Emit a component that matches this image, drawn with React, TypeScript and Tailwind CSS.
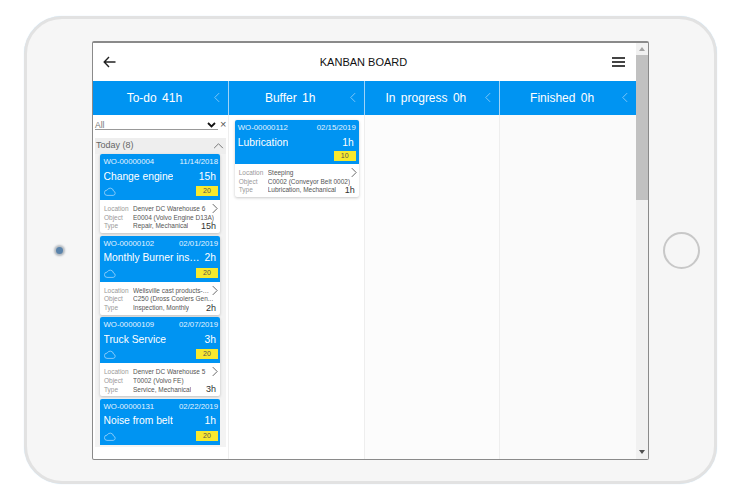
import React from "react";

const Cloud = () => (
  <svg width="12" height="9" viewBox="0 0 14 10.5" fill="none" stroke="#a9d8fb" strokeWidth="0.9">
    <path d="M3.5 9.8h7.2a2.6 2.6 0 0 0 .4-5.1A3.9 3.9 0 0 0 3.7 3.6 3.1 3.1 0 0 0 3.5 9.8z" />
  </svg>
);

const Chevron = ({ dir, color, size = 10 }: { dir: "left" | "right" | "up"; color: string; size?: number }) => {
  const d = dir === "left" ? "M6.5 1 L2.5 5 L6.5 9" : dir === "right" ? "M2.5 1 L6.5 5 L2.5 9" : "M1 6.5 L5 2.5 L9 6.5";
  return (
    <svg width={size} height={size} viewBox="0 0 10 10" fill="none" stroke={color} strokeWidth="0.9">
      <path d={d} />
    </svg>
  );
};

type CardData = {
  wo: string;
  date: string;
  title: string;
  hours: string;
  badge: string;
  location: string;
  object: string;
  type: string;
  cloud?: boolean;
  blueOnly?: boolean;
};

const WorkCard = ({ c, wide }: { c: CardData; wide?: boolean }) => (
  <div className={`shrink-0 ${wide ? "w-[124px]" : "w-[120px]"} ${c.blueOnly ? "" : "rounded-[2px] bg-white shadow-[0_1px_3px_rgba(0,0,0,0.22)]"}`}>
    <div className={`bg-[#0094f2] text-white rounded-t-[2px] ${wide ? "h-[44px] pl-[3px] pr-[3px]" : "h-[46px] pl-[3.5px] pr-[2px]"} flex flex-col`}>
      <div className="flex justify-between text-[7.8px] leading-[10px] pt-[3px] text-[#e3f3ff]">
        <span>{c.wo}</span>
        <span>{c.date}</span>
      </div>
      <div className="flex justify-between items-center text-[10.3px] leading-[14px] mt-[2.5px]">
        <span className="truncate">{c.title}</span>
        <span className="ml-[2px] pr-[2px] shrink-0">{c.hours}</span>
      </div>
      <div className={`flex justify-between items-end ${wide ? "mt-[1.5px]" : "mt-[2.5px]"}`}>
        {c.cloud ? <Cloud /> : <span />}
        <span className="w-[22px] h-[10px] bg-[#f7e92e] text-[#555] text-[7px] leading-[10px] text-center">{c.badge}</span>
      </div>
    </div>
    {!c.blueOnly && (
      <div className="relative h-[33px] px-[4px] pt-[5px] text-[6.5px] leading-[8.7px] text-[#555]">
        <div className="flex">
          <span className="w-[29px] shrink-0 text-[#999]">Location</span>
          <span className="truncate pr-[5px]">{c.location}</span>
        </div>
        <div className="flex">
          <span className="w-[29px] shrink-0 text-[#999]">Object</span>
          <span className="truncate">{c.object}</span>
        </div>
        <div className="flex">
          <span className="w-[29px] shrink-0 text-[#999]">Type</span>
          <span className="truncate">{c.type}</span>
        </div>
        <span className="absolute right-[-1px] top-[3px]">
          <Chevron dir="right" color="#666" size={11} />
        </span>
        <span className="absolute right-[4px] bottom-[2px] text-[9px] leading-[10px] text-[#333]">{c.hours}</span>
      </div>
    )}
  </div>
);

const todo: CardData[] = [
  { wo: "WO-00000004", date: "11/14/2018", title: "Change engine", hours: "15h", badge: "20", location: "Denver DC Warehouse 6", object: "E0004 (Volvo Engine D13A)", type: "Repair, Mechanical", cloud: true },
  { wo: "WO-00000102", date: "02/01/2019", title: "Monthly Burner inspection", hours: "2h", badge: "20", location: "Wellsville cast products-castings", object: "C250 (Dross Coolers Gen...", type: "Inspection, Monthly", cloud: true },
  { wo: "WO-00000109", date: "02/07/2019", title: "Truck Service", hours: "3h", badge: "20", location: "Denver DC Warehouse 5", object: "T0002 (Volvo FE)", type: "Service, Mechanical", cloud: true },
  { wo: "WO-00000131", date: "02/22/2019", title: "Noise from belt", hours: "1h", badge: "20", location: "", object: "", type: "", cloud: true, blueOnly: true },
];

const buffer: CardData = { wo: "WO-00000112", date: "02/15/2019", title: "Lubrication", hours: "1h", badge: "10", location: "Steeping", object: "C0002 (Conveyor Belt 0002)", type: "Lubrication, Mechanical" };

const headers = ["To-do 41h", "Buffer 1h", "In progress 0h", "Finished 0h"];

export default function App() {
  return (
    <div className="w-[740px] h-[501px] bg-white pt-[16px] pl-[24px] overflow-hidden font-['Liberation_Sans',Arial,sans-serif]">
      <div className="w-[693px] h-[468px] rounded-[38px] border-[3px] border-[#e2e2e2] bg-[#f6f6f6] flex items-center shadow-[0_0_1px_#bfe0f8]">
        <div className="w-[65px] flex justify-center">
          <div className="w-[7px] h-[7px] rounded-full bg-[#5a83ab] shadow-[0_0_2px_2px_#b4bac0]" />
        </div>
        <div className="w-[557px] h-[419px] mt-[1px] bg-white border border-[#8a8a8a] border-t-2 flex overflow-hidden rounded-[2px]">
          <div className="flex-1 min-w-0 flex flex-col">
            <div className="h-[38px] shrink-0 flex items-center justify-between pl-[10px] pr-[11px]">
              <svg width="13" height="12" viewBox="0 0 13 12" fill="none" stroke="#222" strokeWidth="1.4">
                <path d="M12.5 6H1.2M6 1 1.2 6 6 11" />
              </svg>
              <span className="text-[11px] text-[#111] mr-[1px]">KANBAN BOARD</span>
              <div className="w-[13px] flex flex-col gap-[2px]">
                <div className="h-[2px] bg-[#444]" />
                <div className="h-[2px] bg-[#444]" />
                <div className="h-[2px] bg-[#444]" />
              </div>
            </div>
            <div className="h-[34px] shrink-0 flex bg-[#0094f2] text-white">
              {headers.map((h, i) => (
                <div key={h} className={`relative w-[136px] flex items-center justify-center text-[12px] [word-spacing:2px] pr-[12px] whitespace-pre ${i < 3 ? "border-r border-[#9fd3f7]" : ""}`}>
                  {h}
                  <span className="absolute right-[5px] top-[11px]">
                    <Chevron dir="left" color="#7cc6f8" size={11} />
                  </span>
                </div>
              ))}
            </div>
            <div className="flex-1 min-h-0 flex">
              <div className="w-[136px] border-r border-[#eeeeee] flex flex-col overflow-hidden">
                <div className="h-[23px] shrink-0 flex items-end pl-[2px] pb-[8px]">
                  <div className="w-[123px] h-[10px] border-b-[1.5px] border-[#999] flex justify-between items-center text-[8.5px] leading-[10px] text-[#777] pr-[2px]">
                    <span>All</span>
                    <svg width="9" height="6" viewBox="0 0 9 6" fill="none" stroke="#111" strokeWidth="1.8">
                      <path d="M1 1l3.5 3.5L8 1" />
                    </svg>
                  </div>
                  <span className="text-[11px] leading-[11px] text-[#555] ml-[2px]">×</span>
                </div>
                <div className="h-[309px] shrink-0 w-[131px] ml-[2px] bg-[#f3f3f3] overflow-hidden">
                  <div className="h-[16px] flex items-center justify-between pl-[1px] pr-[2px] text-[9px] text-[#666] bg-[#eeeeee]">
                    <span>Today (8)</span>
                    <Chevron dir="up" color="#777" size={11} />
                  </div>
                  <div className="flex flex-col gap-[2.67px] pl-[5px]">
                    {todo.map((c) => (
                      <WorkCard key={c.wo} c={c} />
                    ))}
                  </div>
                </div>
              </div>
              <div className="w-[136px] border-r border-[#eeeeee] pl-[6px] pt-[5px]">
                <WorkCard c={buffer} wide />
              </div>
              <div className="w-[136px] border-r border-[#eeeeee] bg-[#fcfcfc]" />
              <div className="w-[136px] bg-[#fafafa]" />
            </div>
          </div>
          <div className="w-[12px] shrink-0 bg-[#f1f1f1] flex flex-col">
            <div className="h-[12px] flex items-center justify-center">
              <div className="w-0 h-0 border-x-[3px] border-x-transparent border-b-[4px] border-b-[#a3a3a3]" />
            </div>
            <div className="h-[145px] bg-[#c1c1c1]" />
            <div className="flex-1" />
            <div className="h-[14px] flex items-center justify-center">
              <div className="w-0 h-0 border-x-[3px] border-x-transparent border-t-[4px] border-t-[#505050]" />
            </div>
          </div>
        </div>
        <div className="flex-1 flex justify-center">
          <div className="w-[37px] h-[37px] rounded-full border-[2.5px] border-[#c8c8c8]" />
        </div>
      </div>
    </div>
  );
}
